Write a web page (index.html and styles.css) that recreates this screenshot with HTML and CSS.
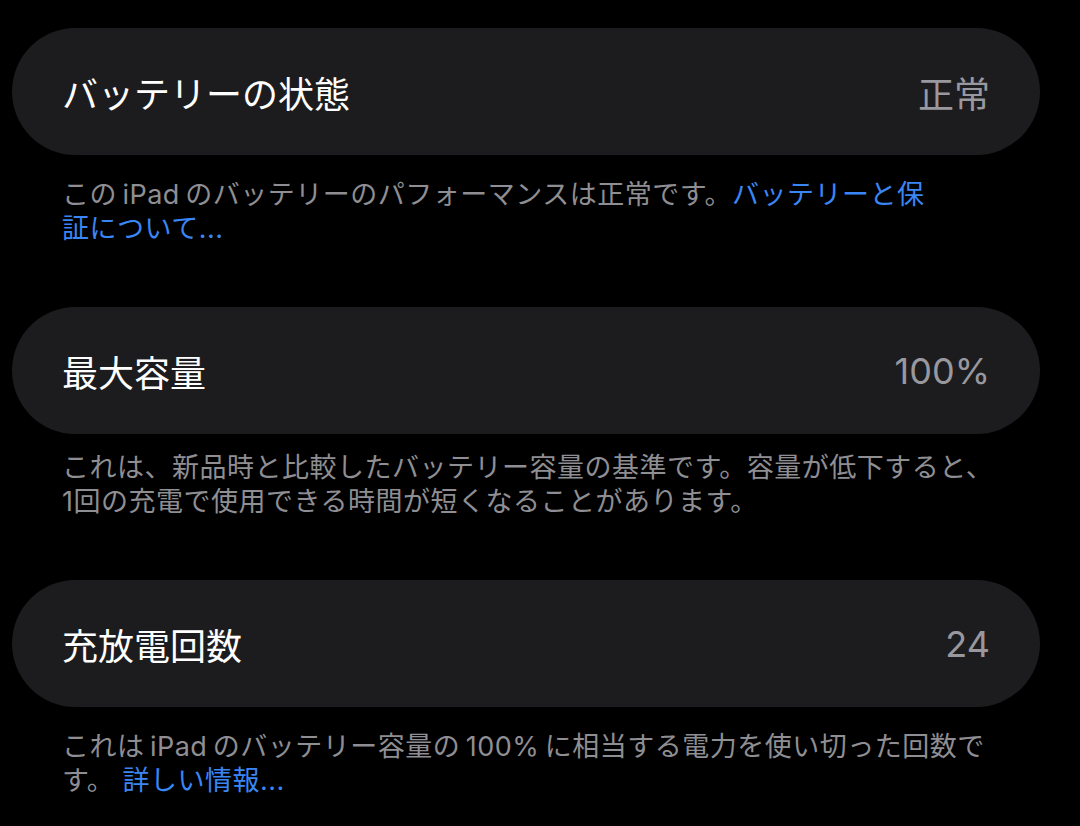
FILE: index.html
```html
<!DOCTYPE html>
<html lang="ja">
<head>
    <meta charset="UTF-8">
    <meta name="viewport" content="width=device-width, initial-scale=1.0">
    <title>バッテリー</title>
    <link rel="stylesheet" href="styles.css">
</head>
<body>

<div class="list">
    <div class="section">
        <div class="cell">
            <span class="cell-title">バッテリーの状態</span>
            <span class="cell-value">正常</span>
        </div>
        <p class="footer">この&thinsp;iPad&thinsp;のバッテリーのパフォーマンスは正常です。<a href="#">バッテリーと保<br>証について...</a></p>
    </div>

    <div class="section">
        <div class="cell">
            <span class="cell-title">最大容量</span>
            <span class="cell-value">100%</span>
        </div>
        <p class="footer footer-tight">これは、新品時と比較したバッテリー容量の基準です。容量が低下すると、<br>1回の充電で使用できる時間が短くなることがあります。</p>
    </div>

    <div class="section">
        <div class="cell">
            <span class="cell-title">充放電回数</span>
            <span class="cell-value">24</span>
        </div>
        <p class="footer">これは&thinsp;iPad&thinsp;のバッテリー容量の&thinsp;100%&thinsp;に相当する電力を使い切った回数で<br>す。 <a href="#">詳しい情報...</a></p>
    </div>
</div>

</body>
</html>
```

FILE: styles.css
```css
body {
    font-family: Inter, "Noto Sans CJK JP", sans-serif;
    background-color: #000;
    color: #fff;
    margin: 0;
    padding: 28px 0 0 12px;
}
.list {
    width: 1028px;
    display: flex;
    flex-direction: column;
    gap: 61px;
}
.cell {
    height: 127px;
    display: flex;
    align-items: center;
    justify-content: space-between;
    padding: 0 50px;
    background-color: #1c1c1e;
    border-radius: 64px;
}
.cell-title {
    font-size: 36px;
    color: #fff;
}
.cell-value {
    font-size: 36px;
    color: #98989e;
}
.footer {
    margin: 0;
    padding: 23px 20px 0 50px;
    font-size: 27px;
    line-height: 34px;
    letter-spacing: 0.5px;
    color: #8e8e93;
}
.footer-tight {
    padding-top: 17px;
}
.footer a {
    color: #3a86f5;
    text-decoration: none;
}
```
